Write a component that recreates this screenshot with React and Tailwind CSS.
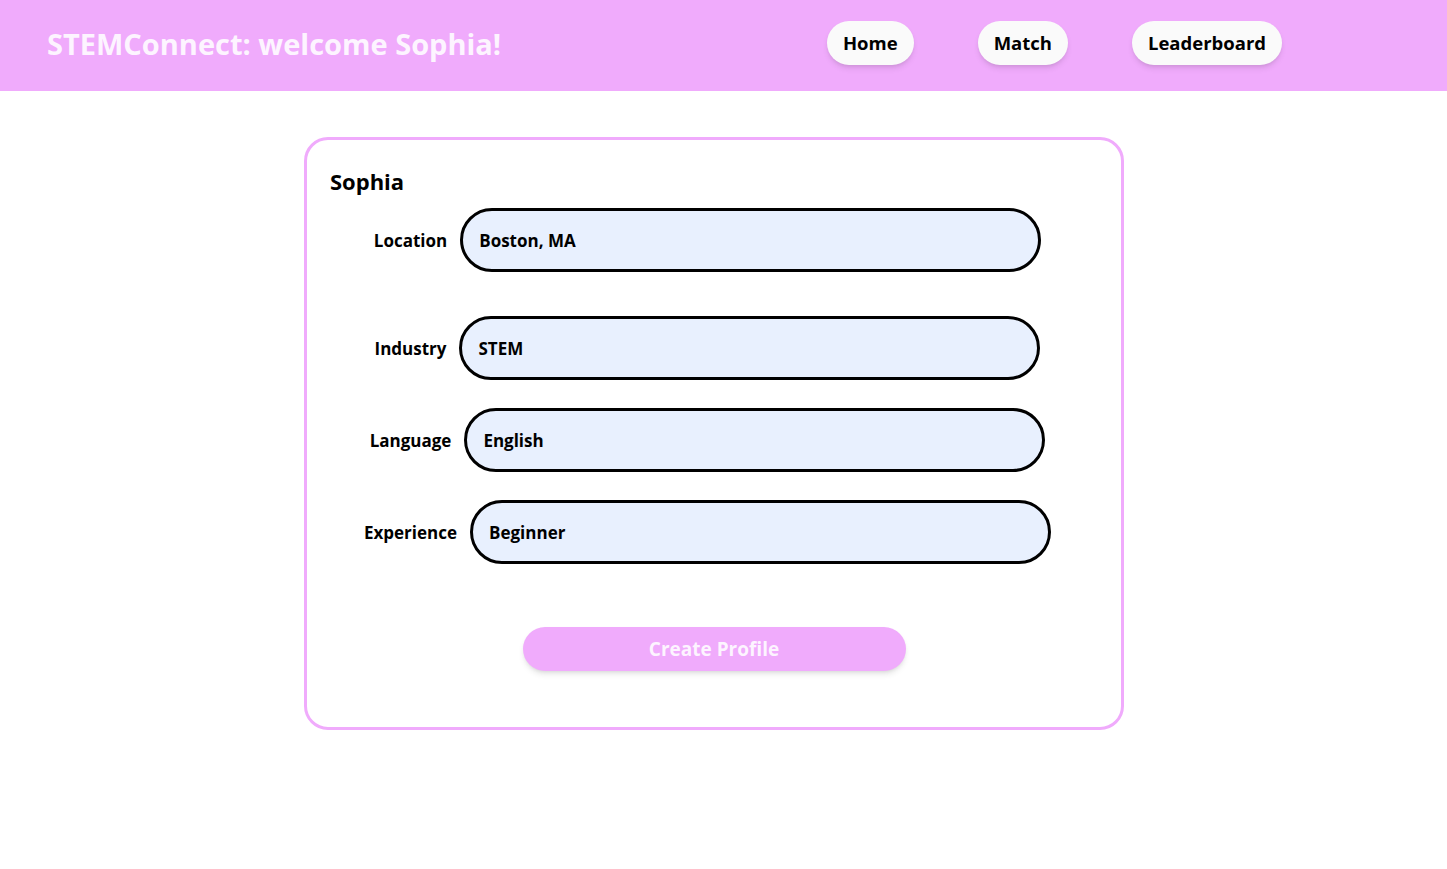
import { useState } from 'react'

const fields = [
  { name: 'location', label: 'Location', value: 'Boston, MA' },
  { name: 'industry', label: 'Industry', value: 'STEM' },
  { name: 'language', label: 'Language', value: 'English' },
  { name: 'experience', label: 'Experience', value: 'Beginner' },
]

export default function App() {
  const [values, setValues] = useState(
    Object.fromEntries(fields.map((f) => [f.name, f.value]))
  )

  const handleChange = (e) => setValues({ ...values, [e.target.name]: e.target.value })

  return (
    <div className="min-h-screen bg-white font-['Open_Sans',sans-serif] text-black">
      <header className="h-[91px] bg-[#f0abfc] flex items-start pl-[47px]">
        <h1 className="mt-[25px] text-[29px] leading-[38px] font-bold text-[#fdf4ff]">STEMConnect: welcome Sophia!</h1>
        <nav className="ml-auto mr-[165px] mt-[21px] flex gap-16">
          {['Home', 'Match', 'Leaderboard'].map((n) => (
            <button
              key={n}
              className="h-[44px] px-4 rounded-full bg-[#fafafa] text-[18.5px] font-bold shadow-md"
            >
              {n}
            </button>
          ))}
        </nav>
      </header>

      <main className="pt-[46px] pr-[19px] flex justify-center">
        <div className="w-[820px] h-[593px] border-[3px] border-[#f0abfc] rounded-[24px] pt-[24px] px-[23px]">
          <h2 className="text-[22px] font-bold leading-[34px]">Sophia</h2>
          <form className="mt-[10px] mr-[13px]">
            {fields.map((f, i) => (
              <div
                key={f.name}
                className={`flex items-center justify-center gap-[13px] ${i === 0 ? '' : i === 1 ? 'mt-[44px]' : 'mt-[28px]'}`}
              >
                <label className="pt-[2px] text-[17px] font-bold">{f.label}</label>
                <input
                  name={f.name}
                  value={values[f.name]}
                  onChange={handleChange}
                  className="w-[581px] h-[64px] rounded-full border-[3px] border-black bg-[#e8f0fe] px-[16px] text-[17px] font-bold focus:outline-none"
                />
              </div>
            ))}
            <div className="mt-[63px] flex justify-center ml-[13px]">
              <button
                type="button"
                className="w-[383px] h-[44px] rounded-full bg-[#f0abfc] text-[#fdf4ff] text-[19px] font-bold shadow-md"
              >
                Create Profile
              </button>
            </div>
          </form>
        </div>
      </main>
    </div>
  )
}
